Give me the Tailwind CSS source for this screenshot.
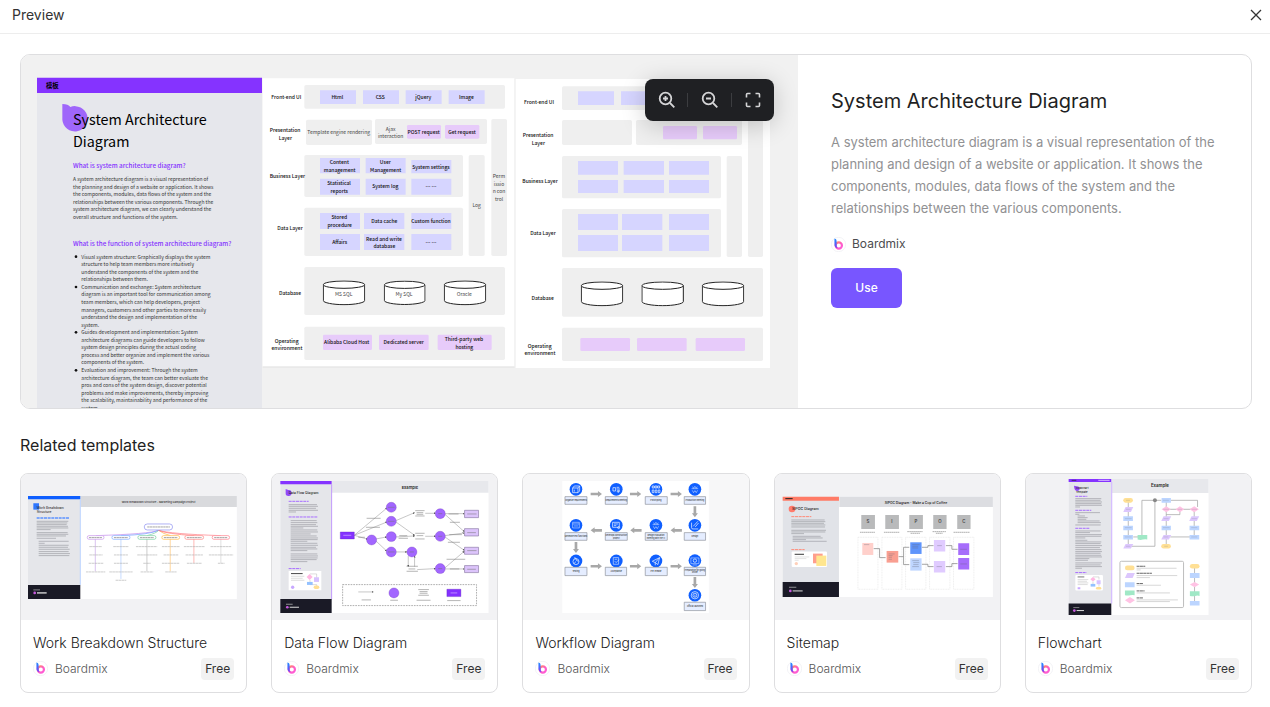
<!DOCTYPE html>
<html lang="en">
<head>
<meta charset="utf-8">
<title>Preview</title>
<meta name="viewport" content="width=device-width, initial-scale=1">
<script src="https://cdn.jsdelivr.net/npm/@tailwindcss/browser@4"></script>
</head>
<body class="min-h-screen bg-white font-['Inter',sans-serif] text-[#1f1f23]">
<svg width="0" height="0" class="absolute" aria-hidden="true">
  <defs>
    <linearGradient id="stem" x1="0" y1="0" x2="0" y2="1"><stop offset="0" stop-color="#1f8bff"/><stop offset="1" stop-color="#7a3dff"/></linearGradient>
    <linearGradient id="bowl" x1="0" y1="0" x2="1" y2="1"><stop offset="0" stop-color="#ff8a5c"/><stop offset=".5" stop-color="#ff5fc4"/><stop offset="1" stop-color="#ff5ad8"/></linearGradient>
    <symbol id="logo" viewBox="0 0 48 48">
      <circle cx="24" cy="24" r="23" fill="#fff" stroke="#ececf0" stroke-width="2"/>
      <circle cx="25" cy="27" r="10" fill="none" stroke="url(#bowl)" stroke-width="7"/>
      <path d="M11 5q7 0 7 8v14q0 5 3 9q-10-2-10-13z" fill="url(#stem)"/>
    </symbol>
    <symbol id="cyl" viewBox="0 0 128 76">
      <path d="M2 13v48c0 6 28 12 62 12s62-6 62-12V13" fill="#fff" stroke="#222" stroke-width="3"/>
      <ellipse cx="64" cy="13" rx="62" ry="11" fill="#fff" stroke="#222" stroke-width="3"/>
    </symbol>
    <marker id="tip" viewBox="0 0 6 6" refX="5" refY="3" markerWidth="6" markerHeight="6" orient="auto" markerUnits="userSpaceOnUse"><path d="M0 0l6 3l-6 3z" fill="#555"/></marker>
  </defs>
</svg>

<header class="flex h-[34px] items-center justify-between border-b border-[#ededed] pl-3 pr-2 pb-1">
  <h1 class="text-sm leading-5 text-[#333]">Preview</h1>
  <button type="button" aria-label="Close" class="p-0">
    <svg width="12" height="12" viewBox="0 0 12 12" class="block" stroke="#333" stroke-width="1.300" fill="none"><path d="M1 1l10 10M11 1L1 11"/></svg>
  </button>
</header>

<main class="pl-5 pr-[18px] pt-5">
  <section class="flex overflow-hidden rounded-[10px] border border-[#dedee0]">
    <div class="relative min-w-0 flex-1 bg-[#f1f1f1]">
      <svg viewBox="63 165 2331 1059" class="block w-full font-['Noto_Sans_CJK_SC',sans-serif]" role="img" aria-label="System architecture diagram board">
        <!-- article column -->
        <g transform="translate(60 162)">
          <path d="M51 72h675v995H51z" fill="#e6e7ec"/>
          <path d="M51 71h675v46H51z" fill="#8533ff"/>
          <text x="78" y="102" font-size="19" font-weight="700">模板</text>
          <path d="M127 150q18 0 24 9a38 38 0 1 1-24 38z" fill="#9f66fa"/>
          <g font-size="43"><text x="159" y="214">System Architecture</text><text x="159" y="279">Diagram</text></g>
          <text x="159" y="342" font-size="19" font-weight="500" fill="#8533ff">What is system architecture diagram?</text>
          <g font-size="15" fill="#333">
            <text x="159" y="381">A system architecture diagram is a visual representation of</text>
            <text x="159" y="404">the planning and design of a website or application. It shows</text>
            <text x="159" y="427">the components, modules, data flows of the system and the</text>
            <text x="159" y="449">relationships between the various components. Through the</text>
            <text x="159" y="472">system architecture diagram, we can clearly understand the</text>
            <text x="159" y="494">overall structure and functions of the system.</text>
          </g>
        </g>
        <g transform="translate(60 690)">
          <text x="159" y="47" font-size="19" font-weight="500" fill="#8533ff">What is the function of system architecture diagram?</text>
          <g fill="#111"><circle cx="168" cy="80" r="4"/><circle cx="168" cy="171" r="4"/><circle cx="168" cy="307" r="4"/><circle cx="168" cy="421" r="4"/></g>
          <g font-size="15" fill="#333">
            <text x="184" y="86">Visual system structure: Graphically displays the system</text>
            <text x="184" y="109">structure to help team members more intuitively</text>
            <text x="184" y="131">understand the components of the system and the</text>
            <text x="184" y="154">relationships between them.</text>
            <text x="184" y="177">Communication and exchange: System architecture</text>
            <text x="184" y="199">diagram is an important tool for communication among</text>
            <text x="184" y="222">team members, which can help developers, project</text>
            <text x="184" y="245">managers, customers and other parties to more easily</text>
            <text x="184" y="267">understand the design and implementation of the</text>
            <text x="184" y="290">system.</text>
            <text x="184" y="313">Guides development and implementation: System</text>
            <text x="184" y="335">architecture diagrams can guide developers to follow</text>
            <text x="184" y="358">system design principles during the actual coding</text>
            <text x="184" y="381">process and better organize and implement the various</text>
            <text x="184" y="403">components of the system.</text>
            <text x="184" y="427">Evaluation and improvement: Through the system</text>
            <text x="184" y="449">architecture diagram, the team can better evaluate the</text>
            <text x="184" y="472">pros and cons of the system design, discover potential</text>
            <text x="184" y="495">problems and make improvements, thereby improving</text>
            <text x="184" y="517">the scalability, maintainability and performance of the</text>
            <text x="184" y="540">system.</text>
          </g>
        </g>
        <!-- filled diagram -->
        <path d="M788 235h756v867H788z" fill="#fff"/><path d="M788 1101h756" stroke="#ddd" stroke-width="3"/>
        <path d="M1545 235v867" stroke="#ececec" stroke-width="3"/>
        <g transform="translate(780 210)">
          <g fill="#efefef">
            <rect x="133" y="45" width="602" height="71" rx="5"/><rect x="138" y="149" width="198" height="76" rx="5"/><rect x="345" y="147" width="336" height="75" rx="5"/>
            <rect x="133" y="255" width="476" height="126" rx="5"/><rect x="133" y="413" width="476" height="145" rx="5"/>
            <rect x="626" y="255" width="48" height="303" rx="5"/><rect x="694" y="147" width="47" height="411" rx="5"/>
            <rect x="133" y="591" width="602" height="144" rx="5"/><rect x="133" y="770" width="602" height="100" rx="5"/>
          </g>
          <path fill="#d6d5ff" d="M180 61h108v41H180zM309 61h108v41H309zM437 61h108v41H437zM566 61h108v41H566zM180 264h120v46H180zM317 264h120v46H317zM454 270h120v40H454zM180 326h120v48H180zM317 326h120v48H317zM454 326h120v48H454zM180 429h120v48H180zM312 429h121v48H312zM454 429h120v48H454zM180 492h120v48H180zM312 492h121v48H312zM454 492h120v48H454z"/>
          <g fill="#e7cbfa"><rect x="441" y="165" width="102" height="41" rx="4"/><rect x="555" y="165" width="103" height="41" rx="4"/><rect x="189" y="794" width="147" height="46" rx="4"/><rect x="357" y="794" width="149" height="46" rx="4"/><rect x="533" y="794" width="162" height="46" rx="4"/></g>
          <use href="#cyl" x="188" y="631" width="128" height="76"/><use href="#cyl" x="371" y="631" width="126" height="76"/><use href="#cyl" x="551" y="631" width="128" height="76"/>
          <g font-size="15" font-weight="500" text-anchor="middle" fill="#111">
            <g><text x="79" y="86">Front-end UI</text><text x="75" y="187">Presentation</text><text x="76" y="210">Layer</text><text x="82" y="324">Business Layer</text><text x="90" y="479">Data Layer</text><text x="90" y="674">Database</text><text x="80" y="818">Operating</text><text x="81" y="840">environment</text></g>
            <text x="232" y="86">Html</text><text x="361" y="86">CSS</text><text x="490" y="86">jQuery</text><text x="619" y="86">Image</text>
            <text x="491" y="191">POST request</text><text x="606" y="191">Get request</text>
            <text x="238" y="283">Content</text><text x="239" y="306">management</text><text x="376" y="283">User</text><text x="377" y="306">Management</text><text x="513" y="296">System settings</text>
            <text x="237" y="345">Statistical</text><text x="238" y="368">reports</text><text x="376" y="355">System log</text><text x="513" y="353">… …</text>
            <text x="238" y="448">Stored</text><text x="239" y="471">procedure</text><text x="373" y="459">Data cache</text><text x="513" y="459">Custom function</text>
            <text x="239" y="522">Affairs</text><text x="372" y="512">Read and write</text><text x="373" y="534">database</text><text x="513" y="522">… …</text>
            <text x="260" y="822">Alibaba Cloud Host</text><text x="431" y="822">Dedicated server</text><text x="612" y="813">Third-party web</text><text x="613" y="836">hosting</text>
            <g font-weight="400" fill="#444"><text x="236" y="193">Template engine rendering</text><text x="392" y="183">Ajax</text><text x="392" y="205">interaction</text><text x="650" y="411">Log</text><text x="717" y="324">Perm</text><text x="717" y="347">issio</text><text x="717" y="370">n con</text><text x="717" y="392">trol</text><text x="251" y="679">MS SQL</text><text x="432" y="679">My SQL</text><text x="613" y="679">Oracle</text></g>
          </g>
        </g>
        <!-- blank diagram -->
        <g transform="translate(1542 162)">
          <path d="M5 75h763v867H5z" fill="#fff"/>
          <g fill="#efefef">
            <rect x="144" y="97" width="603" height="71" rx="5"/><rect x="144" y="198" width="210" height="75" rx="5"/><rect x="366" y="198" width="318" height="75" rx="5"/>
            <rect x="144" y="306" width="477" height="127" rx="5"/><rect x="144" y="465" width="477" height="145" rx="5"/>
            <rect x="638" y="306" width="46" height="303" rx="5"/><rect x="702" y="198" width="45" height="411" rx="5"/>
            <rect x="144" y="642" width="603" height="146" rx="5"/><rect x="144" y="821" width="603" height="100" rx="5"/>
          </g>
          <path fill="#d6d5ff" d="M192 112h108v41H192zM321 112h108v41H321zM192 321h120v41H192zM329 321h121v41H329zM465 321h120v41H465zM192 378h120v39H192zM329 378h121v39H329zM465 378h120v39H465zM192 480h120v48H192zM324 480h121v48H324zM465 480h120v48H465zM192 543h120v48H192zM324 543h121v48H324zM465 543h120v48H465z"/>
          <g fill="#e7cbfa"><rect x="447" y="216" width="102" height="40" rx="4"/><rect x="567" y="216" width="102" height="40" rx="4"/><rect x="199" y="852" width="149" height="39" rx="4"/><rect x="369" y="852" width="149" height="39" rx="4"/><rect x="545" y="852" width="148" height="39" rx="4"/></g>
          <use href="#cyl" x="200" y="682" width="128" height="76"/><use href="#cyl" x="382" y="682" width="128" height="76"/><use href="#cyl" x="563" y="682" width="128" height="76"/>
          <g font-size="15" font-weight="500" text-anchor="middle" fill="#111"><text x="75" y="149">Front-end UI</text><text x="72" y="250">Presentation</text><text x="73" y="272">Layer</text><text x="78" y="388">Business Layer</text><text x="87" y="542">Data Layer</text><text x="86" y="738">Database</text><text x="77" y="881">Operating</text><text x="78" y="903">environment</text></g>
        </g>
      </svg>
      <div class="absolute right-6 top-6 flex h-[42px] w-[129px] items-center rounded-lg bg-[#1f2023] shadow-[0_4px_24px_rgba(0,0,0,0.2)]">
        <button type="button" aria-label="Zoom in" class="flex flex-1 justify-center"><svg width="18" height="18" viewBox="-1 0 18 18" fill="none" stroke="#d5d5d7" stroke-width="1.800"><circle cx="7.500" cy="7.500" r="5.800"/><path d="M12 12l4.300 4.300M5 7.500h5M7.500 5v5"/></svg></button>
        <span class="h-[14px] w-px bg-[#3c3d40]"></span>
        <button type="button" aria-label="Zoom out" class="flex flex-1 justify-center"><svg width="18" height="18" viewBox="-1 0 18 18" fill="none" stroke="#d5d5d7" stroke-width="1.800"><circle cx="7.500" cy="7.500" r="5.800"/><path d="M12 12l4.300 4.300M5 7.500h5"/></svg></button>
        <span class="h-[14px] w-px bg-[#3c3d40]"></span>
        <button type="button" aria-label="Full screen" class="flex flex-1 justify-center"><svg width="18" height="18" viewBox="0 0 18 18" fill="none" stroke="#d5d5d7" stroke-width="1.600"><path d="M6.500 2.500h-3q-1 0-1 1v3M11.500 2.500h3q1 0 1 1v3M6.500 15.500h-3q-1 0-1-1v-3M11.500 15.500h3q1 0 1-1v-3"/></svg></button>
      </div>
    </div>
    <div class="w-[453px] shrink-0 pl-[33px] pr-[31px] pt-8">
      <h2 class="text-xl leading-7">System Architecture Diagram</h2>
      <p class="mt-4 text-[13px] leading-[22px] text-[#919193]">A system architecture diagram is a visual representation of the planning and design of a website or application. It shows the components, modules, data flows of the system and the relationships between the various components.</p>
      <div class="mt-[15px] flex items-center gap-1.5">
        <svg class="size-[15px]" aria-hidden="true"><use href="#logo"/></svg>
        <span class="text-xs leading-5 text-[#4c4c4f]">Boardmix</span>
      </div>
      <button type="button" class="mt-[14px] h-10 w-[71px] rounded-md bg-[#7856ff] text-xs font-medium text-white">Use</button>
    </div>
  </section>

  <h2 class="mt-6 text-base leading-6">Related templates</h2>

  <ul class="mt-4 grid grid-cols-5 gap-6">
    <li class="overflow-hidden rounded-lg border border-[#dedee0]">
      <svg viewBox="3 12 676 438" class="block w-full bg-[#f2f2f4]" role="img" aria-label="Work breakdown structure thumbnail">
        <path d="M24 78h627v309H24z" fill="#fff"/><path d="M181 78h470v33H181z" fill="#d9dadd"/>
        <path d="M24 78h157v268H24z" fill="#e5e6ea"/><path d="M24 78h157v10H24z" fill="#0f5fff"/><path d="M24 345h157v42H24z" fill="#1a1a26"/><path d="M181 88v257" stroke="#bcd4ff" stroke-width="3"/>
        <path d="M40 100h17v19H40z" fill="#2d76ff"/>
        <text x="416" y="98" font-size="8" font-weight="600" text-anchor="middle" fill="#444">Work Breakdown Structure - Marketing Campaign Project</text>
        <g font-size="10" font-weight="500" fill="#333"><text x="50" y="116">Work Breakdown</text><text x="50" y="128">Structure</text></g>
        <path d="M50 144h98" stroke="#5c92ff" stroke-width="4" stroke-dasharray="9 2"/>
        <path d="M50 154h95M50 159h92M50 164h90M50 169h94M50 174h95M50 179h42M50 188h93M50 193h95M50 198h88M50 205h58M56 214h90M56 220h18M56 226h90M56 232h88M56 238h93M56 245h90M56 251h94M56 257h92" stroke="#9a9ba1" stroke-width="2"/>
        <circle cx="44" cy="369" r="4" fill="#c95ae0"/><path d="M40 360h20" stroke="#bbb" stroke-width="2"/><path d="M51 369h29" stroke="#ddd" stroke-width="4"/>
        <g fill="none" stroke-width="2">
          <path d="M416 181Q390 192 228 197" stroke="#bf86ec"/><path d="M416 181Q390 194 303 197" stroke="#6a9dff"/><path d="M416 181Q410 190 381 197" stroke="#79cfa0"/><path d="M416 181Q430 192 452 197" stroke="#ffb43e"/><path d="M416 181Q440 192 523 197" stroke="#ff6f6b"/><path d="M416 181Q450 192 603 197" stroke="#ff7780"/>
          <path d="M226 207v97" stroke="#c6a1e6"/><path d="M303 207v120" stroke="#a9c8ff"/><path d="M381 207v97" stroke="#b3b3b3"/><path d="M451 207v97" stroke="#ffc46c"/><path d="M522 207v72" stroke="#ff9793"/><path d="M603 207v72" stroke="#d0d0d0"/>
        </g>
        <g fill="#fff" stroke-width="2"><rect x="373" y="162" width="85" height="18" rx="9" stroke="#8a8cf0"/><rect x="202" y="197" width="50" height="11" rx="5" stroke="#c792ec"/><rect x="276" y="197" width="54" height="11" rx="5" stroke="#7aa9ff"/><rect x="354" y="197" width="54" height="11" rx="5" stroke="#6fcc9b"/><rect x="426" y="197" width="53" height="11" rx="5" stroke="#ffb73f"/><rect x="495" y="197" width="56" height="11" rx="5" stroke="#ff7b78"/><rect x="577" y="197" width="52" height="11" rx="5" stroke="#ff7b88"/></g>
        <path d="M382 171h68M207 203h40M282 203h42M360 203h42M432 203h41M501 203h44M583 203h40" stroke="#777" stroke-width="2" stroke-dasharray="7 1"/>
        <path d="M208 230h38M208 255h40M206 280h44M198 306h58M280 230h46M282 255h42M282 280h42M268 306h70M287 331h32M348 230h64M352 255h60M370 280h22M362 306h38M426 230h54M431 255h44M426 280h52M436 306h34M492 230h63M497 255h52M501 280h44M572 230h62M567 255h73M594 280h20" stroke="#b4b4b4" stroke-width="2" stroke-dasharray="8 1"/>
      </svg>
      <div class="p-3">
        <h3 class="text-sm font-light leading-[22px] text-[#222]"><a href="#work-breakdown">Work Breakdown Structure</a></h3>
        <div class="mt-1 flex items-center"><svg class="size-[15px]" aria-hidden="true"><use href="#logo"/></svg><span class="ml-[7px] text-xs font-light leading-[22px] text-[#555]">Boardmix</span><span class="ml-auto rounded bg-[#f2f2f2] px-1 text-xs leading-[22px] text-[#333]">Free</span></div>
      </div>
    </li>

    <li class="overflow-hidden rounded-lg border border-[#dedee0]">
      <svg viewBox="6 12 676 438" class="block w-full bg-[#f2f2f4]" role="img" aria-label="Data flow diagram thumbnail">
        <path d="M31 33h625v396H31z" fill="#fff"/><path d="M186 33h470v35H186z" fill="#e7e8ec"/>
        <path d="M31 33h154v396H31z" fill="#e5e6ea"/><path d="M31 33h154v10H31z" fill="#8533ff"/><path d="M185 43v345" stroke="#a96cff" stroke-width="2"/><path d="M31 387h154v42H31z" fill="#1a1a26"/>
        <path d="M47 57l8 3a9 9 0 1 1-8 8z" fill="#9149f8"/>
        <text x="420" y="56" font-size="12" font-weight="600" text-anchor="middle" fill="#222">Example</text>
        <text x="56" y="72" font-size="10" font-weight="500" fill="#222">Data Flow Diagram</text>
        <path d="M56 94h60M56 141h88M56 296h36" stroke="#a76bff" stroke-width="3" stroke-dasharray="9 2"/>
        <path d="M56 104h85M56 109h88M56 115h82M56 121h88M56 126h22M62 152h78M62 158h80M62 164h76M62 169h82M62 174h38M62 180h80M62 186h82M62 192h60M62 198h78M62 204h82M62 209h81M62 214h50M62 220h80M62 226h82M62 232h76M62 237h80M62 242h50M62 252h80M62 258h82M62 264h81M62 269h78M62 275h50" stroke="#9a9aa2" stroke-width="2"/>
        <path d="M56 303h98v58H56z" fill="#fff"/><path d="M63 311h35" stroke="#444" stroke-width="3"/><path d="M63 319h40M63 325h35M63 331h40M120 330v14h20v8M120 312h20v12" stroke="#999" fill="none"/><path d="M110 321l9-9l9 9l-9 9z" fill="#ffb8e2"/><rect x="132" y="322" width="15" height="14" fill="#d7c2ff"/><rect x="111" y="336" width="17" height="9" fill="#94c1ff"/><rect x="131" y="347" width="17" height="10" rx="5" fill="#ffdf94"/><circle cx="68" cy="352" r="5" fill="#c8a9ff"/>
        <circle cx="52" cy="412" r="4" fill="#c95ae0"/><path d="M48 403h20" stroke="#ccc" stroke-width="2"/><path d="M59 412h28" stroke="#ddd" stroke-width="3"/>
        <g stroke="#555" fill="none"><path d="M253 196l98-82" marker-end="url(#tip)"/><path d="M253 196l98-40" marker-end="url(#tip)"/><path d="M253 196l40 12" marker-end="url(#tip)"/><path d="M318 207l32-6" marker-end="url(#tip)"/><path d="M318 213l32 30" marker-end="url(#tip)"/><path d="M378 152l56-24" marker-end="url(#tip)"/><path d="M378 156l56 40" marker-end="url(#tip)"/><path d="M378 201l56-3" marker-end="url(#tip)"/><path d="M466 130h31" marker-end="url(#tip)"/><path d="M466 199h31" marker-end="url(#tip)"/><path d="M378 246h33" marker-end="url(#tip)"/><path d="M415 258v32" marker-end="url(#tip)"/><path d="M434 290v-32" marker-end="url(#tip)"/><path d="M442 299l55-3" marker-end="url(#tip)"/><path d="M525 131h58" marker-end="url(#tip)"/><path d="M525 133l58 52" marker-end="url(#tip)"/><path d="M525 197l58-8" marker-end="url(#tip)"/><path d="M525 201l58 40" marker-end="url(#tip)"/><path d="M525 294l58-50" marker-end="url(#tip)"/><path d="M525 297h58" marker-end="url(#tip)"/><path d="M265 366h45" marker-end="url(#tip)"/></g>
        <g fill="#a266ff" stroke="#7541bd"><circle cx="364" cy="112" r="15"/><circle cx="364" cy="154" r="15"/><circle cx="364" cy="200" r="15"/><circle cx="364" cy="246" r="15"/><circle cx="305" cy="210" r="15"/><circle cx="426" cy="246" r="15"/><circle cx="511" cy="131" r="15"/><circle cx="511" cy="199" r="15"/><circle cx="511" cy="296" r="15"/><circle cx="372" cy="369" r="15"/></g>
        <path d="M211 186h42v21h-42zM531 358h42v22h-42z" fill="#8431ff" stroke="#5c20b8"/>
        <path d="M584 121h42v22h-42zM584 176h42v22h-42zM584 232h42v21h-42zM584 287h42v21h-42z" fill="#dcc4fb" stroke="#8d7ba6" stroke-width="2"/>
        <path d="M436 122h28M436 138h28M436 190h28M436 207h28M410 289h34M410 304h34M445 359h32M445 376h32M440 128h20M440 133h20M440 197h20M416 297h20M290 145h42M288 172h42M265 202h20M388 197h24M386 205h28M536 132h30M540 157h30M538 194h38M534 217h36M530 268h56M540 297h28M275 390h28M361 391h23M440 391h42M532 392h40M449 365h24M449 370h24M354 112h20M354 154h20M354 246h20M420 246h12M505 131h12M505 199h12M505 296h12M592 132h28M592 188h26M592 242h28M592 298h26" stroke="#777" stroke-width="2" opacity=".8"/>
        <path d="M218 344h402v63H218z" fill="none" stroke="#888" stroke-width="2" stroke-dasharray="5 3"/>
        <path d="M220 196h24M542 369h20" stroke="#d5b8ff" stroke-width="2"/>
      </svg>
      <div class="p-3">
        <h3 class="text-sm font-light leading-[22px] text-[#222]"><a href="#data-flow">Data Flow Diagram</a></h3>
        <div class="mt-1 flex items-center"><svg class="size-[15px]" aria-hidden="true"><use href="#logo"/></svg><span class="ml-[7px] text-xs font-light leading-[22px] text-[#555]">Boardmix</span><span class="ml-auto rounded bg-[#f2f2f2] px-1 text-xs leading-[22px] text-[#333]">Free</span></div>
      </div>
    </li>

    <li class="overflow-hidden rounded-lg border border-[#dedee0]">
      <svg viewBox="3 12 676 438" class="block w-full bg-[#f7f7f8]" role="img" aria-label="Workflow diagram thumbnail">
        <path d="M121 33h440v396H121z" fill="#fff"/>
        <g fill="#0f5fff"><circle cx="162" cy="58" r="19"/><circle cx="283" cy="58" r="19"/><circle cx="402" cy="58" r="19"/><circle cx="519" cy="58" r="19"/><circle cx="162" cy="166" r="19"/><circle cx="283" cy="166" r="19"/><circle cx="402" cy="166" r="19"/><circle cx="519" cy="166" r="19"/><circle cx="162" cy="273" r="19"/><circle cx="283" cy="273" r="19"/><circle cx="402" cy="273" r="19"/><circle cx="519" cy="272" r="19"/><circle cx="519" cy="376" r="19"/></g>
        <g fill="none" stroke="#fff" stroke-width="2">
          <path d="M152 54h16v14h-16zM152 54l5-6h16l-5 6M168 68l5-5V48M157 59v6"/>
          <path d="M273 53h8v10h-8zM284 52h8M284 57h10M288 66l5-5"/><circle cx="289" cy="64" r="3"/>
          <path d="M391 54v-6h6v6zM399 54v-6h6v6zM407 54v-6h6v6zM391 68v-8h5v8zM400 68v-8h5v8zM409 68v-8h5v8z"/>
          <path d="M509 56h20M512 50l3 5l4-6l4 6l3-5M511 61l4 7l4-6l4 6l4-7" opacity=".7"/>
          <path d="M152 157h20v17h-20zM152 162h20M156 168h12" opacity=".7"/>
          <path d="M272 157h20v15h-20zM276 162h12M276 167h7"/><circle cx="290" cy="173" r="3"/>
          <path d="M392 164h20M395 158l3 5l4-6l4 6l3-5M394 169l4 7l4-6l4 6l4-7" opacity=".7"/>
          <path d="M509 158v15q0 4 4 4h16M514 169l14-15M520 171l10-12"/>
          <circle cx="162" cy="275" r="9"/><path d="M156 264h5l3 8l6 2M162 275l-6 6"/>
          <path d="M274 263h16v20h-16zM278 268h8M278 273l4 5l10-9" opacity=".8"/>
          <path d="M391 274l22-11l-5 21l-8-6zM400 278l13-15M400 278v8"/>
          <path d="M507 264h24v17h-24zM512 285h14" opacity=".7"/><circle cx="519" cy="272" r="5"/>
          <circle cx="519" cy="376" r="11"/><circle cx="519" cy="376" r="6"/><path d="M519 374v6"/>
        </g>
        <path fill="#a8a8a8" d="M206 68h22v-5l12 9l-12 9v-5h-22zM324 68h22v-5l12 9l-12 9v-5h-22zM446 68h22v-5l12 9l-12 9v-5h-22zM240 185h-22v5l-12-9l12-9v5h22zM359 185h-22v5l-12-9l12-9v5h22zM480 185h-22v5l-12-9l12-9v5h22zM206 285h22v-5l12 9l-12 9v-5h-22zM324 285h22v-5l12 9l-12 9v-5h-22zM446 285h22v-5l12 9l-12 9v-5h-22zM515 109h8v21h5l-9 12l-9-12h5zM158 216h8v21h5l-9 12l-9-12h5zM515 321h8v21h5l-9 12l-9-12h5z"/>
        <path fill="#e5edff" stroke="#8b8f99" stroke-width="2" d="M129 80h66v23h-66zM250 80h66v23h-66zM370 80h66v23h-66zM487 80h64v23h-64zM129 188h66v23h-66zM250 188h66v23h-66zM370 188h66v23h-66zM487 188h64v23h-64zM129 292h66v25h-66zM250 292h64v25h-64zM370 292h66v25h-66zM487 292h64v25h-64zM487 397h64v25h-64z"/>
        <g font-size="6" font-weight="500" text-anchor="middle" fill="#333"><text x="162" y="94">Organize requirements</text><text x="283" y="94">Requirements meeting</text><text x="402" y="94">Prototyping</text><text x="519" y="94">Production meeting</text><text x="162" y="202">Generate test functions</text><text x="283" y="199">Develops construction</text><text x="283" y="206">project</text><text x="402" y="199">Design Evaluation</text><text x="402" y="206">meeting with the UI</text><text x="519" y="202">Design</text><text x="162" y="306">Testing</text><text x="283" y="306">Acceptance</text><text x="402" y="306">Pre-release</text><text x="519" y="303">Preparation for going</text><text x="519" y="310">online</text><text x="519" y="411">Official launched</text></g>
      </svg>
      <div class="p-3">
        <h3 class="text-sm font-light leading-[22px] text-[#222]"><a href="#workflow">Workflow Diagram</a></h3>
        <div class="mt-1 flex items-center"><svg class="size-[15px]" aria-hidden="true"><use href="#logo"/></svg><span class="ml-[7px] text-xs font-light leading-[22px] text-[#555]">Boardmix</span><span class="ml-auto rounded bg-[#f2f2f2] px-1 text-xs leading-[22px] text-[#333]">Free</span></div>
      </div>
    </li>

    <li class="overflow-hidden rounded-lg border border-[#dedee0]">
      <svg viewBox="5 12 676 438" class="block w-full bg-[#f2f2f4]" role="img" aria-label="SIPOC diagram thumbnail">
        <path d="M28 80h631v301H28z" fill="#fff"/><path d="M198 80h461v31H198z" fill="#dcdde1"/><path d="M28 80h169v301H28z" fill="#e1e3e8"/><path d="M28 80h169v12H28z" fill="#ff7b66"/><path d="M28 336h169v45H28z" fill="#1a1a26"/>
        <path d="M36 86h22" stroke="#222" stroke-width="3"/><circle cx="56" cy="117" r="10" fill="#ff7b6c"/>
        <text x="428" y="101" font-size="10" font-weight="600" text-anchor="middle" fill="#333">SIPOC Diagram - Make a Cup of Coffee</text>
        <text x="56" y="121" font-size="11" font-weight="500" fill="#222">SIPOC Diagram</text>
        <path d="M54 140h60M54 239h40" stroke="#ff8a76" stroke-width="3" stroke-dasharray="9 2"/>
        <path d="M54 150h100M54 155h102M54 160h98M54 165h102M54 171h101M54 181h104M54 186h102M54 191h38M58 199h84M58 204h90M58 209h40M58 214h102" stroke="#9a9ca2" stroke-width="2"/>
        <rect x="55" y="245" width="106" height="46" rx="3" fill="#fff"/><path d="M119 251h29v29h-29z" fill="#ff9e8c"/><path d="M129 257h30v31h-30z" fill="#ffe68e"/><path d="M64 253h28" stroke="#333" stroke-width="3"/><path d="M64 261h44M64 266h35M64 271h12" stroke="#aaa"/><circle cx="69" cy="281" r="5" fill="#ffd0ba"/>
        <circle cx="51" cy="363" r="4" fill="#c95ae0"/><path d="M47 352h22" stroke="#ccc" stroke-width="2"/><path d="M58 363h30" stroke="#ddd" stroke-width="3"/>
        <path fill="#b9babb" d="M264 135h41v42h-41zM336 135h41v42h-41zM408 135h41v42h-41zM480 135h40v42h-40zM552 135h40v42h-40z"/>
        <g font-size="13" font-weight="600" text-anchor="middle" fill="#444"><text x="284" y="158">S</text><text x="356" y="158">I</text><text x="428" y="158">P</text><text x="500" y="158">O</text><text x="572" y="158">C</text></g>
        <path d="M260 187h45M332 187h46M402 185h46M412 190h28M478 185h40M488 190h20M541 187h49" stroke="#888" stroke-width="2" stroke-dasharray="5 1"/>
        <g fill="none" stroke="#cbcbcb" stroke-dasharray="3 2"><path d="M254 202h60v156h-60zM326 202h60v156h-60zM397 202h61v156h-61zM469 202h61v156h-61zM541 202h61v156h-61z"/></g>
        <g fill="none" stroke="#777" stroke-width="2"><path d="M301 236h18v27h18M376 260h15v-28h17M391 260v24h17M446 232h18v-5h17M446 283h18v7h17M518 227h18v11h17M518 290h18v-9h17"/></g>
        <path fill="#ffd0cb" d="M267 219h33v36h-33z"/><path fill="#f99f91" d="M340 243h35v35h-35z"/><path fill="#5e94fb" d="M411 217h34v35h-34z"/><path fill="#bfd6ff" d="M411 265h34v37h-34z"/><path fill="#e0cbff" d="M482 210h34v35h-34zM482 273h34v35h-34z"/><path fill="#a66dfb" d="M555 220h33v35h-33zM555 264h33v35h-33z"/>
        <path d="M272 224h16M346 252h18M346 257h12M346 262h10M346 268h10M417 224h22M417 229h18M417 234h18M417 272h20M420 278h18M420 284h16M417 290h20M492 227h14M490 290h16M561 238h20M561 282h20" stroke="#606473" stroke-width="1"/>
      </svg>
      <div class="p-3">
        <h3 class="text-sm font-light leading-[22px] text-[#222]"><a href="#sitemap">Sitemap</a></h3>
        <div class="mt-1 flex items-center"><svg class="size-[15px]" aria-hidden="true"><use href="#logo"/></svg><span class="ml-[7px] text-xs font-light leading-[22px] text-[#555]">Boardmix</span><span class="ml-auto rounded bg-[#f2f2f2] px-1 text-xs leading-[22px] text-[#333]">Free</span></div>
      </div>
    </li>

    <li class="overflow-hidden rounded-lg border border-[#dedee0]">
      <svg viewBox="5 12 676 438" class="block w-full bg-[#f2f2f4]" role="img" aria-label="Flowchart thumbnail">
        <path d="M133 27h420v408H133z" fill="#fff"/><path d="M262 27h291v42H262z" fill="#e7e8ec"/><path d="M133 27h128v408H133z" fill="#e5e6ea"/><path d="M133 27h128v9H133z" fill="#8533ff"/><path d="M262 36v365" stroke="#d6bfff" stroke-width="4"/><path d="M133 401h128v34H133z" fill="#1a1a26"/>
        <path d="M142 31h14" stroke="#222" stroke-width="2"/><path d="M222 31h34" stroke="#d5b8ff" stroke-width="3"/>
        <path d="M149 47l8 2q10 0 9 9q-2 6-9 5q-6-1-7-8z" fill="#9149f8"/>
        <text x="407" y="52" font-size="13" font-weight="600" text-anchor="middle" fill="#222">Example</text>
        <g font-size="8" font-weight="500" fill="#222"><text x="155" y="58">Flowchart</text><text x="155" y="68">Template</text></g>
        <path d="M153 79h36M153 121h48M153 175h42M153 308h34" stroke="#a76bff" stroke-width="3" stroke-dasharray="9 2"/>
        <path d="M153 86h78M153 91h76M153 96h80M153 101h78M153 106h80M153 111h14M153 128h74M153 133h12M160 138h22M160 143h30M160 148h26M160 153h66M160 158h70M153 165h76M153 183h76M153 188h44M153 194h80M153 199h78M153 204h30M153 211h36M153 216h78M153 221h76M153 227h80M153 233h74M153 239h78M153 245h80M153 250h76M153 256h78M153 261h80M153 266h42M153 271h38M153 279h80M153 285h76M153 290h80M153 295h20" stroke="#9a9aa2" stroke-width="2"/>
        <rect x="153" y="315" width="83" height="47" rx="3" fill="#fff"/><path d="M160 321h20" stroke="#333" stroke-width="2"/><path d="M160 329h32M160 334h28M160 339h32M160 344h30M206 335v8M224 340v10M206 321h18v8" stroke="#999" fill="none"/><path d="M198 328l8-7l8 7l-8 7z" fill="#ffb8e2"/><rect x="217" y="331" width="12" height="12" fill="#d7c2ff"/><rect x="199" y="342" width="14" height="8" fill="#94c1ff"/><rect x="215" y="351" width="16" height="8" rx="4" fill="#ffdf94"/><rect x="160" y="352" width="8" height="6" fill="#c8a9ff"/>
        <circle cx="150" cy="422" r="4" fill="#c95ae0"/><path d="M147 413h18" stroke="#aaa" stroke-width="2"/><path d="M157 422h22" stroke="#ddd" stroke-width="3"/>
        <g fill="none" stroke="#9a9a9a" stroke-width="2"><path d="M312 91v138h80V91M327 201h26V91h58M440 91h80v20M426 91v138M436 118h70M467 118v16h-41M510 118v83h-72M511 289v110"/></g>
        <circle cx="392" cy="91" r="6" fill="#888"/>
        <g fill="#ffe095"><rect x="297" y="84" width="29" height="14" rx="7"/><rect x="411" y="222" width="29" height="14" rx="7"/><rect x="302" y="287" width="29" height="14" rx="7"/><rect x="497" y="282" width="29" height="14" rx="7"/></g>
        <path fill="#bcd5ff" d="M297 139h29v14h-29zM297 167h29v14h-29zM297 195h29v14h-29zM412 84h28v14h-28zM412 167h28v14h-28zM496 167h29v14h-29zM496 195h29v14h-29zM302 337h29v15h-29zM497 309h29v15h-29zM497 393h29v14h-29z"/>
        <path fill="#dcc7fd" d="M304 111h23l-7 15h-23zM304 222h23l-7 14h-23zM418 139h23l-7 14h-23zM418 195h23l-7 14h-23zM502 139h23l-7 14h-23zM309 309h23l-7 15h-23z"/>
        <path fill="#ffc3e4" d="M412 118l14-9l14 9l-14 9zM454 118l13-9l13 9l-13 9zM496 118l14-9l14 9l-14 9zM302 391l15-10l15 10l-15 10zM497 344l14-8l14 8l-14 8z"/>
        <path fill="#a0e8c6" d="M340 195h29v14q-6-2-13 0t-16 0zM302 362h29v14q-6-2-13 0t-16 0zM497 364h29v14q-6-2-13 0t-16 0z"/>
        <path d="M305 91h12M305 118h14M302 146h20M302 173h20M302 201h20M305 229h13M416 91h18M417 118h18M460 118h14M502 118h17M418 146h15M416 173h20M418 201h14M502 146h16M501 173h18M501 201h18M420 229h11" stroke="#686c78" opacity=".6"/>
        <rect x="287" y="274" width="191" height="139" rx="4" fill="none" stroke="#bdbdbd" stroke-width="3"/>
        <path d="M337 289h26M337 310h46M337 341h20M337 363h24M337 384h20" stroke="#666" stroke-width="3" stroke-dasharray="9 1"/>
        <path d="M337 295h120M337 300h12M337 317h122M337 323h40M337 346h73M337 369h100M337 390h124M337 395h100" stroke="#c2c2c2" stroke-width="2"/>
      </svg>
      <div class="p-3">
        <h3 class="text-sm font-light leading-[22px] text-[#222]"><a href="#flowchart">Flowchart</a></h3>
        <div class="mt-1 flex items-center"><svg class="size-[15px]" aria-hidden="true"><use href="#logo"/></svg><span class="ml-[7px] text-xs font-light leading-[22px] text-[#555]">Boardmix</span><span class="ml-auto rounded bg-[#f2f2f2] px-1 text-xs leading-[22px] text-[#333]">Free</span></div>
      </div>
    </li>
  </ul>
</main>
</body>
</html>
